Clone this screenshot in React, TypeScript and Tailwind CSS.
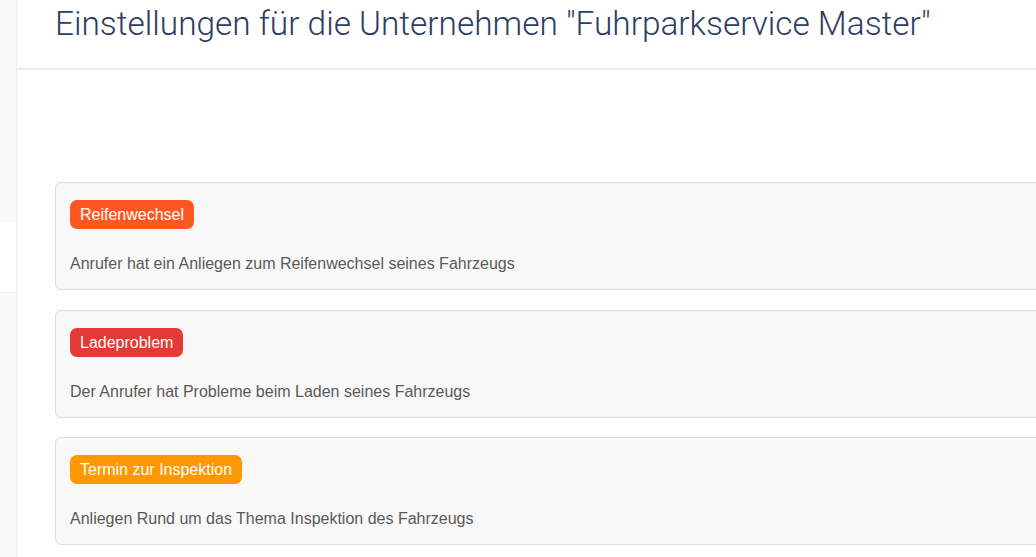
import React from "react";

const items = [
  { label: "Reifenwechsel", color: "bg-[#ff5722]", text: "Anrufer hat ein Anliegen zum Reifenwechsel seines Fahrzeugs" },
  { label: "Ladeproblem", color: "bg-[#e53935]", text: "Der Anrufer hat Probleme beim Laden seines Fahrzeugs" },
  { label: "Termin zur Inspektion", color: "bg-[#ff9800]", text: "Anliegen Rund um das Thema Inspektion des Fahrzeugs" },
];

export default function App() {
  return (
    <div className="flex h-[557px] w-[1036px] overflow-hidden bg-white" style={{ fontFamily: '"Liberation Sans", Arial, sans-serif' }}>
      <aside className="flex w-[17px] shrink-0 flex-col border-r border-[#eeeeee] bg-[#fafafa]">
        <div className="h-[220px]" />
        <div className="h-[73px] border-y border-[#f0f0f0] bg-white" />
        <div className="flex-1" />
      </aside>
      <main className="flex min-w-0 flex-1 flex-col">
        <header className="flex h-[70px] shrink-0 items-start border-b-2 border-[#ebebeb] pl-[38px] pt-[4px]">
          <h1 className="whitespace-nowrap text-[33.4px] font-light leading-[40px] text-[#2c3e63]" style={{ fontFamily: '"Roboto", "Liberation Sans", sans-serif' }}>
            Einstellungen für die Unternehmen "Fuhrparkservice Master"
          </h1>
        </header>
        <div className="flex flex-col gap-[19.5px] pl-[38px] pt-[112px]">
          {items.map((it) => (
            <div key={it.label} className="-mr-[20px] flex h-[108px] flex-col rounded-[6px] border border-[#dddddd] bg-[#f8f8f8] px-[14px] pt-[17px]">
              <div className="flex">
                <span className={`${it.color} h-[29px] rounded-[7px] px-[10px] text-[16px] leading-[29px] text-white`}>{it.label}</span>
              </div>
              <p className="mt-[24px] text-[16px] leading-[21px] text-[#5a5a5a]">{it.text}</p>
            </div>
          ))}
        </div>
      </main>
    </div>
  );
}
